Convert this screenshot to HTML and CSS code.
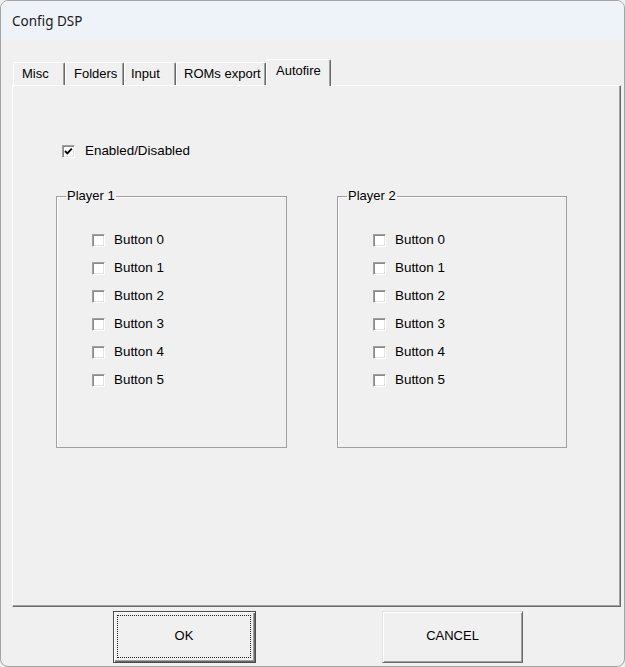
FILE: index.html
```html
<!DOCTYPE html>
<html>
<head>
<meta charset="utf-8">
<title>Config DSP</title>
<link rel="stylesheet" href="styles.css">
</head>
<body>
<div class="window">
  <div class="titlebar"><span class="title">Config DSP</span></div>
  <div class="client">
    <div class="tabs">
      <div class="tab tab-misc">Misc</div>
      <div class="tab tab-folders">Folders</div>
      <div class="tab tab-input">Input</div>
      <div class="tab tab-roms">ROMs export</div>
      <div class="tab tab-autofire selected">Autofire</div>
    </div>
    <div class="panel">
      <label class="check enabled">
        <span class="box"><svg viewBox="0 0 11 11" width="11" height="11"><polyline points="2,5 4.3,7.4 8.8,2.6" fill="none" stroke="#000" stroke-width="1.9"/></svg></span>
        <span class="lbl">Enabled/Disabled</span>
      </label>
      <div class="groups">
        <fieldset class="group">
          <legend>Player 1</legend>
          <div class="list">
            <label class="check"><span class="box"></span><span class="lbl">Button 0</span></label>
            <label class="check"><span class="box"></span><span class="lbl">Button 1</span></label>
            <label class="check"><span class="box"></span><span class="lbl">Button 2</span></label>
            <label class="check"><span class="box"></span><span class="lbl">Button 3</span></label>
            <label class="check"><span class="box"></span><span class="lbl">Button 4</span></label>
            <label class="check"><span class="box"></span><span class="lbl">Button 5</span></label>
          </div>
        </fieldset>
        <fieldset class="group group2">
          <legend>Player 2</legend>
          <div class="list">
            <label class="check"><span class="box"></span><span class="lbl">Button 0</span></label>
            <label class="check"><span class="box"></span><span class="lbl">Button 1</span></label>
            <label class="check"><span class="box"></span><span class="lbl">Button 2</span></label>
            <label class="check"><span class="box"></span><span class="lbl">Button 3</span></label>
            <label class="check"><span class="box"></span><span class="lbl">Button 4</span></label>
            <label class="check"><span class="box"></span><span class="lbl">Button 5</span></label>
          </div>
        </fieldset>
      </div>
    </div>
    <div class="buttons">
      <div class="btn btn-ok"><span class="focus">OK</span></div>
      <div class="btn btn-cancel">CANCEL</div>
    </div>
  </div>
</div>
</body>
</html>
```
FILE: styles.css
```css
* { box-sizing: border-box; }
html, body { margin: 0; padding: 0; background: #f0f0f0; }
body { font-family: "Liberation Sans", Arial, sans-serif; font-size: 13px; color: #000; }

.window {
  width: 625px;
  height: 667px;
  border: 1px solid #a3a3a3;
  border-radius: 8px;
  overflow: hidden;
  background: #f0f0f0;
  display: flex;
  flex-direction: column;
}

.titlebar {
  height: 39px;
  flex: none;
  background: #eef3f9;
  display: flex;
  align-items: center;
  padding-left: 11px;
}
.title {
  font-family: "Noto Sans", "Open Sans", sans-serif;
  font-size: 13.5px;
  color: #1a1a1a;
}

.client {
  padding: 19px 3px 0 11px;
}

.tabs {
  display: flex;
  align-items: flex-end;
  height: 26px;
  padding-left: 1px;
}
.tab {
  height: 23px;
  padding: 3px 0 0 8px;
  line-height: 16px;
  background: #f0f0f0;
  border-top: 1px solid #fff;
  border-left: 1px solid #fff;
  border-right: 1px solid #696969;
  border-radius: 2px 2px 0 0;
  box-shadow: inset -1px 0 0 #a0a0a0;
  white-space: nowrap;
}
.tab-misc { width: 52px; }
.tab-folders { width: 59px; }
.tab-input { width: 52px; padding-left: 6px; }
.tab-roms { width: 90px; padding-left: 7px; }
.tab-autofire { width: 65px; padding-left: 9px; }
.tab.selected {
  height: 27px;
  margin-bottom: -1px;
  position: relative;
  z-index: 1;
}

.panel {
  width: 609px;
  height: 522px;
  border-top: 1px solid #fff;
  border-left: 1px solid #fff;
  border-right: 1px solid #696969;
  border-bottom: 1px solid #696969;
  box-shadow: inset -1px -1px 0 #a0a0a0;
  padding: 57px 0 0 43px;
}

.check {
  display: flex;
  align-items: center;
  height: 16px;
  line-height: 16px;
  white-space: nowrap;
}
.box {
  width: 13px;
  height: 13px;
  flex: none;
  background: #fff;
  border-top: 1px solid #a0a0a0;
  border-left: 1px solid #a0a0a0;
  border-right: 1px solid #fff;
  border-bottom: 1px solid #fff;
  box-shadow: inset 1px 1px 0 #8a8a8a, inset -1px -1px 0 #e3e3e3;
  display: flex;
}
.box svg { display: block; }
.lbl { margin-left: 9px; font-size: 13.4px; }

.enabled { margin-left: 6px; }
.enabled .lbl { margin-left: 10px; }

.groups {
  display: flex;
  gap: 50px;
  margin-top: 29px;
}
.group {
  margin: 0;
  width: 231px;
  height: 260px;
  border: 1px solid #a0a0a0;
  padding: 0;
  box-shadow: inset 1px 1px 0 #fff;
}
.group2 { width: 230px; }
.group legend {
  margin-left: 9px;
  padding: 0 1px;
  line-height: 16px;
  font-size: 13px;
}
.list {
  display: flex;
  flex-direction: column;
  gap: 12px;
  padding: 28px 0 0 35px;
}

.buttons {
  display: flex;
  margin-top: 4px;
  padding-left: 101px;
  gap: 126px;
}
.btn {
  height: 52px;
  display: flex;
  align-items: center;
  justify-content: center;
  background: #f0f0f0;
  font-size: 13px;
}
.btn-ok {
  width: 143px;
  border: 1px solid #4d4d4d;
  box-shadow: inset 1px 1px 0 #fff, inset -1px -1px 0 #696969, inset -2px -2px 0 #a0a0a0;
  padding: 3px 4px 4px 3px;
  align-items: stretch;
}
.focus {
  flex: 1;
  border: 1px dotted #222;
  display: flex;
  align-items: center;
  justify-content: center;
  padding-bottom: 2px;
}
.btn-cancel {
  width: 141px;
  border-top: 1px solid #e3e3e3;
  border-left: 1px solid #e3e3e3;
  border-right: 1px solid #696969;
  border-bottom: 1px solid #696969;
  box-shadow: inset 1px 1px 0 #fff, inset -1px -1px 0 #a0a0a0;
  padding-bottom: 3px;
}
```
